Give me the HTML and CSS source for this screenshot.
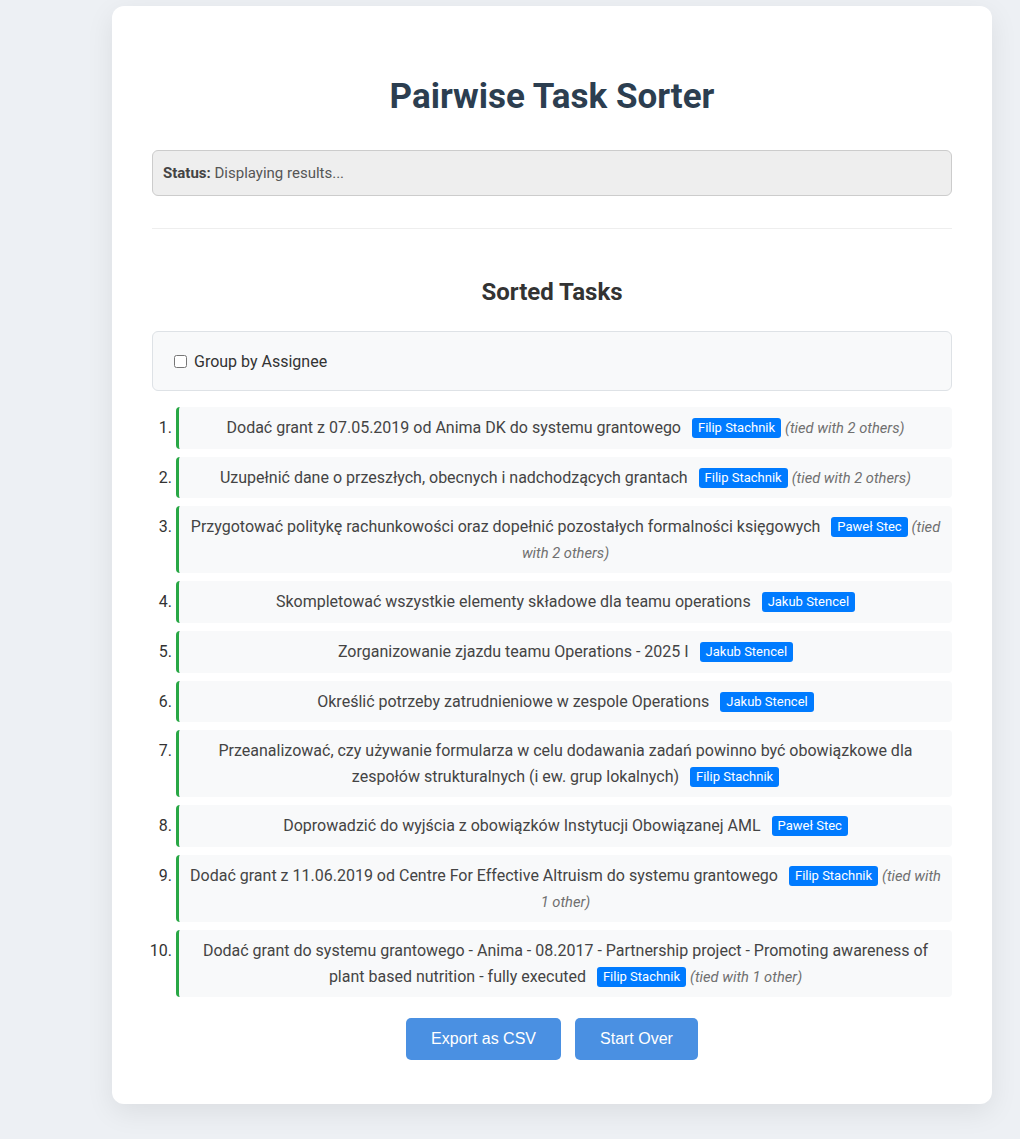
FILE: index.html
```html
<!DOCTYPE html>
<html lang="pl">
<head>
<meta charset="utf-8">
<title>Pairwise Task Sorter</title>
<link rel="stylesheet" href="styles.css">
</head>
<body>
<div class="page">
  <div class="card">
    <h1 class="title">Pairwise Task Sorter</h1>
    <div class="status"><strong>Status:</strong> Displaying results...</div>
    <hr class="divider">
    <h2 class="subtitle">Sorted Tasks</h2>
    <div class="options">
      <label class="option"><input type="checkbox" class="check"> Group by Assignee</label>
    </div>
    <ol class="tasks">
      <li class="task">Dodać grant z 07.05.2019 od Anima DK do systemu grantowego <span class="badge">Filip Stachnik</span> <span class="tied">(tied with 2 others)</span></li>
      <li class="task">Uzupełnić dane o przeszłych, obecnych i nadchodzących grantach <span class="badge">Filip Stachnik</span> <span class="tied">(tied with 2 others)</span></li>
      <li class="task">Przygotować politykę rachunkowości oraz dopełnić pozostałych formalności księgowych <span class="badge">Paweł Stec</span> <span class="tied">(tied with 2 others)</span></li>
      <li class="task">Skompletować wszystkie elementy składowe dla teamu operations <span class="badge">Jakub Stencel</span></li>
      <li class="task">Zorganizowanie zjazdu teamu Operations - 2025 I <span class="badge">Jakub Stencel</span></li>
      <li class="task">Określić potrzeby zatrudnieniowe w zespole Operations <span class="badge">Jakub Stencel</span></li>
      <li class="task">Przeanalizować, czy używanie formularza w celu dodawania zadań powinno być obowiązkowe dla zespołów strukturalnych (i ew. grup lokalnych) <span class="badge">Filip Stachnik</span></li>
      <li class="task">Doprowadzić do wyjścia z obowiązków Instytucji Obowiązanej AML <span class="badge">Paweł Stec</span></li>
      <li class="task">Dodać grant z 11.06.2019 od Centre For Effective Altruism do systemu grantowego <span class="badge">Filip Stachnik</span> <span class="tied">(tied with 1 other)</span></li>
      <li class="task">Dodać grant do systemu grantowego - Anima - 08.2017 - Partnership project - Promoting awareness of plant based nutrition - fully executed <span class="badge">Filip Stachnik</span> <span class="tied">(tied with 1 other)</span></li>
    </ol>
    <div class="actions">
      <button class="btn">Export as CSV</button>
      <button class="btn">Start Over</button>
    </div>
  </div>
</div>
</body>
</html>
```
FILE: styles.css
```css
html, body {
  margin: 0;
  padding: 0;
}
body {
  background: #edf0f4;
  font-family: Roboto, "Noto Sans", sans-serif;
  color: #333;
}
.page {
  padding: 6px 28px 34px 112px;
}
.card {
  background: #fff;
  border-radius: 12px;
  box-shadow: 0 8px 28px rgba(0, 0, 0, 0.08);
  padding: 40px 40px 44px;
}
.title {
  font-size: 35px;
  font-weight: 700;
  color: #2c3e50;
  text-align: center;
  margin: 30px 0 32px;
  line-height: 42px;
}
.status {
  background: #eee;
  border: 1px solid #ccc;
  border-radius: 6px;
  padding: 11px 10px;
  font-size: 15px;
  line-height: 22px;
  color: #555;
}
.status strong {
  color: #444;
}
.divider {
  border: 0;
  border-top: 1px solid #eee;
  margin: 32px 0 0;
}
.subtitle {
  font-size: 24px;
  font-weight: 700;
  color: #333;
  text-align: center;
  margin: 49px 0 0;
  line-height: 28px;
}
.options {
  margin-top: 25px;
  background: #f8f9fa;
  border: 1px solid #dee2e6;
  border-radius: 6px;
  padding: 17px 20px 16px;
}
.option {
  display: flex;
  align-items: center;
  font-size: 16px;
  line-height: 25px;
  color: #333;
}
.check {
  width: 13px;
  height: 13px;
  margin: 0 7px 0 1px;
}
.tasks {
  margin: 16px 0 0;
  padding-left: 24px;
}
.task {
  background: #f8f9fa;
  border-left: 3px solid #28a745;
  border-radius: 4px;
  padding: 8px 10px;
  margin-bottom: 8px;
  text-align: center;
  font-size: 16px;
  line-height: 1.6;
  color: #444;
}
.task::marker {
  color: #333;
}
.badge {
  display: inline-block;
  background: #007bff;
  color: #fff;
  font-size: 13px;
  line-height: 20px;
  padding: 0 6px;
  border-radius: 3px;
  margin-left: 7px;
  vertical-align: 1px;
}
.tied {
  font-style: italic;
  font-size: 14.7px;
  color: #707070;
}
.actions {
  display: flex;
  justify-content: center;
  gap: 14px;
  margin-top: 21px;
}
.btn {
  background: #4a90e2;
  color: #fff;
  border: 0;
  border-radius: 5px;
  font-family: "Liberation Sans", Arial, sans-serif;
  font-size: 16px;
  line-height: 18px;
  padding: 12px 25px;
  cursor: pointer;
}
```
